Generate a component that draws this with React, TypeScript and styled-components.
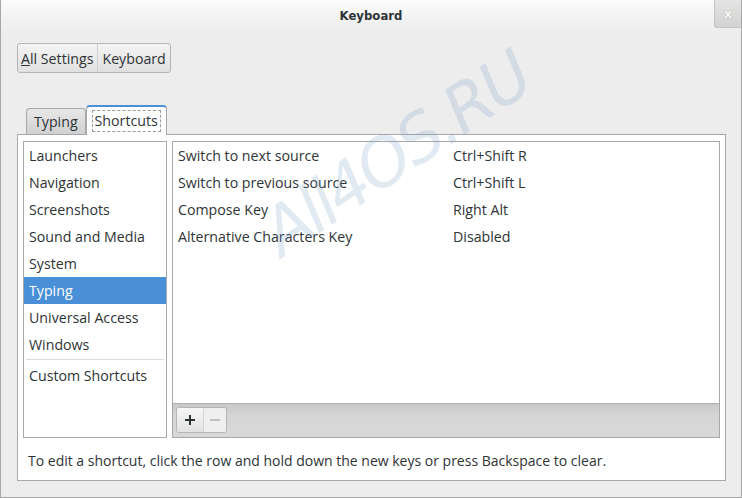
import React from "react";
import { styled, createGlobalStyle } from "styled-components";

const Global = createGlobalStyle`
  html, body { margin: 0; padding: 0; background: #ededed; }
  body { font-family: "Open Sans", "DejaVu Sans", sans-serif; color: #2e3436; }
`;

const Window = styled.div`
  position: relative;
  width: 742px;
  height: 498px;
  box-sizing: border-box;
  border: 1px solid #a8a8a8;
  border-top: none;
  background: #ededed;
  display: flex;
  flex-direction: column;
  overflow: hidden;
`;

const TitleBar = styled.div`
  height: 31px;
  flex: none;
  display: flex;
  align-items: center;
  justify-content: center;
  background: linear-gradient(#fbfbfb, #ededed);
  font-family: "DejaVu Sans Condensed", "DejaVu Sans", sans-serif;
  font-weight: bold;
  font-size: 13px;
  color: #2e3436;
  position: relative;
`;

const CloseBtn = styled.div`
  position: absolute;
  right: 0;
  top: 0;
  width: 27px;
  height: 28px;
  box-sizing: border-box;
  border-left: 1px solid #c4c4c4;
  border-bottom: 1px solid #c4c4c4;
  border-bottom-left-radius: 3px;
  background: linear-gradient(#e4e4e4, #d2d2d2);
  color: #f8f8f8;
  display: flex;
  align-items: center;
  justify-content: center;
  font-family: "DejaVu Sans", sans-serif;
  font-size: 13px;
  font-weight: bold;
  text-shadow: 0 0 1px #888;
`;

const Body = styled.div`
  flex: 1;
  padding: 12px 16px 0 16px;
  display: flex;
  flex-direction: column;
`;

const Crumbs = styled.div`
  display: flex;
  align-self: flex-start;
  height: 30px;
  box-sizing: border-box;
  border: 1px solid #b6b6b3;
  border-radius: 3px;
  background: linear-gradient(#f4f4f4, #e0e0e0);
  font-size: 14.2px;
`;

const Crumb = styled.div<{ $first?: boolean }>`
  display: flex;
  align-items: center;
  padding: 0 4px 0 ${({ $first }) => ($first ? "3px" : "4px")};
  border-left: ${({ $first }) => ($first ? "none" : "1px solid #d0d0d0")};
  u { text-decoration: underline; }
`;

const TabRow = styled.div`
  display: flex;
  align-items: flex-end;
  margin-top: 30px;
  padding-left: 9px;
  height: 31px;
`;

const Tab = styled.div<{ $active?: boolean }>`
  height: ${({ $active }) => ($active ? "30px" : "26px")};
  box-sizing: border-box;
  padding: 0 ${({ $active }) => ($active ? "5px" : "7px")};
  display: flex;
  align-items: center;
  font-size: 14.2px;
  border: 1px solid #a8a8a8;
  border-bottom: none;
  border-radius: 4px 4px 0 0;
  background: ${({ $active }) =>
    $active ? "#ffffff" : "linear-gradient(#e8e8e8, #d0d0d0)"};
  border-top: ${({ $active }) => ($active ? "2px solid #4a90d9" : "1px solid #a8a8a8")};
  margin-bottom: ${({ $active }) => ($active ? "-1px" : "0")};
  position: relative;
  z-index: ${({ $active }) => ($active ? 2 : 1)};
`;

const FocusLabel = styled.span`
  border: 1px dashed #9a9a9a;
  padding: 0 2px;
  line-height: 20px;
`;

const Notebook = styled.div`
  width: 709px;
  height: 347px;
  box-sizing: border-box;
  border: 1px solid #a8a8a8;
  background: #ffffff;
  padding: 6px 5px 0 5px;
  display: flex;
  flex-direction: column;
`;

const Panes = styled.div`
  display: flex;
  gap: 5px;
  height: 297px;
`;

const Sidebar = styled.div`
  width: 144px;
  box-sizing: border-box;
  border: 1px solid #a8a8a8;
  display: flex;
  flex-direction: column;
`;

const Item = styled.div<{ $selected?: boolean }>`
  height: 27px;
  flex: none;
  display: flex;
  align-items: center;
  padding-left: 5px;
  font-size: 14.2px;
  background: ${({ $selected }) => ($selected ? "#4a90d9" : "transparent")};
  color: ${({ $selected }) => ($selected ? "#ffffff" : "#2e3436")};
`;

const Separator = styled.div`
  height: 1px;
  flex: none;
  margin: 1px 2px 2px 2px;
  background: #dcdcdc;
`;

const Main = styled.div`
  flex: 1;
  box-sizing: border-box;
  border: 1px solid #a8a8a8;
  display: flex;
  flex-direction: column;
`;

const Tree = styled.div`
  flex: 1;
`;

const Row = styled.div`
  height: 27px;
  display: grid;
  grid-template-columns: 275px 1fr;
  align-items: center;
  padding-left: 5px;
  font-size: 14.2px;
`;

const Toolbar = styled.div`
  height: 34px;
  box-sizing: border-box;
  border-top: 1px solid #b0b0b0;
  background: linear-gradient(#c9c9c9, #d6d6d6 40%, #d8d8d8);
  padding: 3px 3px;
  display: flex;
`;

const Linked = styled.div`
  display: flex;
  height: 26px;
  box-sizing: border-box;
  border: 1px solid #b6b6b3;
  border-radius: 3px;
  overflow: hidden;
`;

const ToolBtn = styled.div<{ $disabled?: boolean }>`
  width: ${({ $disabled }) => ($disabled ? "22px" : "26px")};
  display: flex;
  align-items: center;
  justify-content: center;
  background: ${({ $disabled }) =>
    $disabled ? "#efefef" : "linear-gradient(#f6f6f6, #e2e2e2)"};
  border-left: ${({ $disabled }) => ($disabled ? "1px solid #d6d6d6" : "none")};
`;

const Hint = styled.div`
  font-size: 14px;
  padding: 13px 0 0 5px;
`;

const Watermark = styled.div`
  position: absolute;
  left: 288px;
  top: 200px;
  font-family: "DejaVu Sans", "Liberation Sans", sans-serif;
  font-style: italic;
  font-size: 66px;
  line-height: 68px;
  color: rgba(120, 155, 195, 0.22);
  transform: rotate(-34deg);
  transform-origin: left bottom;
  pointer-events: none;
  white-space: nowrap;
  letter-spacing: -3px;
`;

const categories = [
  "Launchers",
  "Navigation",
  "Screenshots",
  "Sound and Media",
  "System",
  "Typing",
  "Universal Access",
  "Windows",
];

const shortcuts = [
  { name: "Switch to next source", key: "Ctrl+Shift R" },
  { name: "Switch to previous source", key: "Ctrl+Shift L" },
  { name: "Compose Key", key: "Right Alt" },
  { name: "Alternative Characters Key", key: "Disabled" },
];

const Plus = () => (
  <svg width="12" height="12" viewBox="0 0 12 12">
    <path d="M6 1v10M1 6h10" stroke="#2e3436" strokeWidth="2" />
  </svg>
);

const Minus = () => (
  <svg width="12" height="12" viewBox="0 0 12 12">
    <path d="M1 6h10" stroke="#c0c0c0" strokeWidth="2" />
  </svg>
);

export default function App() {
  return (
    <>
      <Global />
      <Window>
        <TitleBar>
          Keyboard
          <CloseBtn>x</CloseBtn>
        </TitleBar>
        <Body>
          <Crumbs>
            <Crumb $first>
              <span>
                <u>A</u>ll Settings
              </span>
            </Crumb>
            <Crumb>Keyboard</Crumb>
          </Crumbs>
          <TabRow>
            <Tab>Typing</Tab>
            <Tab $active>
              <FocusLabel>Shortcuts</FocusLabel>
            </Tab>
          </TabRow>
          <Notebook>
            <Panes>
              <Sidebar>
                {categories.map((c) => (
                  <Item key={c} $selected={c === "Typing"}>
                    {c}
                  </Item>
                ))}
                <Separator />
                <Item>Custom Shortcuts</Item>
              </Sidebar>
              <Main>
                <Tree>
                  {shortcuts.map((s) => (
                    <Row key={s.name}>
                      <span>{s.name}</span>
                      <span>{s.key}</span>
                    </Row>
                  ))}
                </Tree>
                <Toolbar>
                  <Linked>
                    <ToolBtn>
                      <Plus />
                    </ToolBtn>
                    <ToolBtn $disabled>
                      <Minus />
                    </ToolBtn>
                  </Linked>
                </Toolbar>
              </Main>
            </Panes>
            <Hint>
              To edit a shortcut, click the row and hold down the new keys or
              press Backspace to clear.
            </Hint>
          </Notebook>
        </Body>
        <Watermark>All4OS.RU</Watermark>
      </Window>
    </>
  );
}
